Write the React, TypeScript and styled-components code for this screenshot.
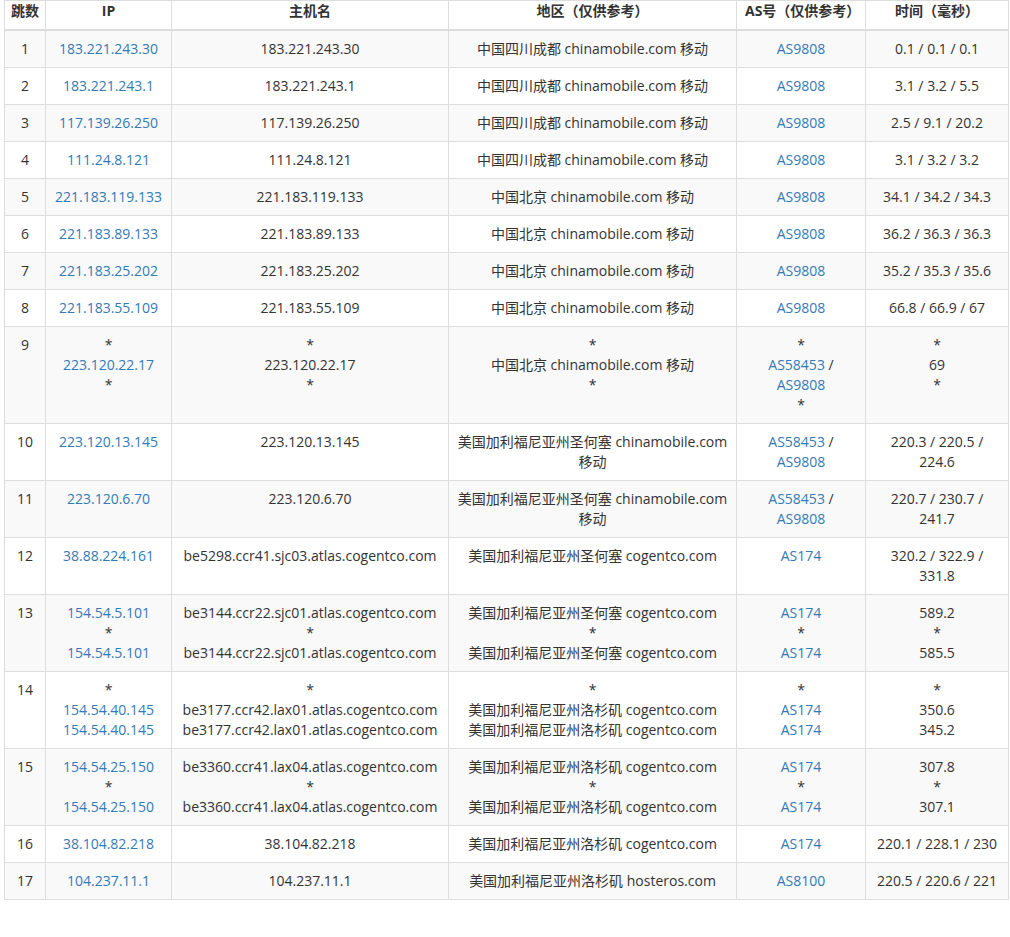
import React from "react";
import styled, { createGlobalStyle } from "styled-components";

const Global = createGlobalStyle`
  body {
    margin: 0;
    padding: 0 0 0 4px;
    background: #fff;
    font-family: "Open Sans", "Noto Sans CJK SC", sans-serif;
    font-size: 14px;
    color: #333;
  }
  * { box-sizing: border-box; }
`;

type Hop = { n: number; ip: string[]; host: string[]; area: string[]; as: string[]; time: string[] };

const hops: Hop[] = [
  { n: 1, ip: ["183.221.243.30"], host: ["183.221.243.30"], area: ["中国四川成都 chinamobile.com 移动"], as: ["AS9808"], time: ["0.1 / 0.1 / 0.1"] },
  { n: 2, ip: ["183.221.243.1"], host: ["183.221.243.1"], area: ["中国四川成都 chinamobile.com 移动"], as: ["AS9808"], time: ["3.1 / 3.2 / 5.5"] },
  { n: 3, ip: ["117.139.26.250"], host: ["117.139.26.250"], area: ["中国四川成都 chinamobile.com 移动"], as: ["AS9808"], time: ["2.5 / 9.1 / 20.2"] },
  { n: 4, ip: ["111.24.8.121"], host: ["111.24.8.121"], area: ["中国四川成都 chinamobile.com 移动"], as: ["AS9808"], time: ["3.1 / 3.2 / 3.2"] },
  { n: 5, ip: ["221.183.119.133"], host: ["221.183.119.133"], area: ["中国北京 chinamobile.com 移动"], as: ["AS9808"], time: ["34.1 / 34.2 / 34.3"] },
  { n: 6, ip: ["221.183.89.133"], host: ["221.183.89.133"], area: ["中国北京 chinamobile.com 移动"], as: ["AS9808"], time: ["36.2 / 36.3 / 36.3"] },
  { n: 7, ip: ["221.183.25.202"], host: ["221.183.25.202"], area: ["中国北京 chinamobile.com 移动"], as: ["AS9808"], time: ["35.2 / 35.3 / 35.6"] },
  { n: 8, ip: ["221.183.55.109"], host: ["221.183.55.109"], area: ["中国北京 chinamobile.com 移动"], as: ["AS9808"], time: ["66.8 / 66.9 / 67"] },
  { n: 9, ip: ["*", "223.120.22.17", "*"], host: ["*", "223.120.22.17", "*"], area: ["*", "中国北京 chinamobile.com 移动", "*"], as: ["*", "AS58453 / AS9808", "*"], time: ["*", "69", "*"] },
  { n: 10, ip: ["223.120.13.145"], host: ["223.120.13.145"], area: ["美国加利福尼亚州圣何塞 chinamobile.com 移动"], as: ["AS58453 / AS9808"], time: ["220.3 / 220.5 / 224.6"] },
  { n: 11, ip: ["223.120.6.70"], host: ["223.120.6.70"], area: ["美国加利福尼亚州圣何塞 chinamobile.com 移动"], as: ["AS58453 / AS9808"], time: ["220.7 / 230.7 / 241.7"] },
  { n: 12, ip: ["38.88.224.161"], host: ["be5298.ccr41.sjc03.atlas.cogentco.com"], area: ["美国加利福尼亚州圣何塞 cogentco.com"], as: ["AS174"], time: ["320.2 / 322.9 / 331.8"] },
  { n: 13, ip: ["154.54.5.101", "*", "154.54.5.101"], host: ["be3144.ccr22.sjc01.atlas.cogentco.com", "*", "be3144.ccr22.sjc01.atlas.cogentco.com"], area: ["美国加利福尼亚州圣何塞 cogentco.com", "*", "美国加利福尼亚州圣何塞 cogentco.com"], as: ["AS174", "*", "AS174"], time: ["589.2", "*", "585.5"] },
  { n: 14, ip: ["*", "154.54.40.145", "154.54.40.145"], host: ["*", "be3177.ccr42.lax01.atlas.cogentco.com", "be3177.ccr42.lax01.atlas.cogentco.com"], area: ["*", "美国加利福尼亚州洛杉矶 cogentco.com", "美国加利福尼亚州洛杉矶 cogentco.com"], as: ["*", "AS174", "AS174"], time: ["*", "350.6", "345.2"] },
  { n: 15, ip: ["154.54.25.150", "*", "154.54.25.150"], host: ["be3360.ccr41.lax04.atlas.cogentco.com", "*", "be3360.ccr41.lax04.atlas.cogentco.com"], area: ["美国加利福尼亚州洛杉矶 cogentco.com", "*", "美国加利福尼亚州洛杉矶 cogentco.com"], as: ["AS174", "*", "AS174"], time: ["307.8", "*", "307.1"] },
  { n: 16, ip: ["38.104.82.218"], host: ["38.104.82.218"], area: ["美国加利福尼亚州洛杉矶 cogentco.com"], as: ["AS174"], time: ["220.1 / 228.1 / 230"] },
  { n: 17, ip: ["104.237.11.1"], host: ["104.237.11.1"], area: ["美国加利福尼亚州洛杉矶 hosteros.com"], as: ["AS8100"], time: ["220.5 / 220.6 / 221"] },
];

const widths = [41, 126, 277, 288, 129, 143];

const Table = styled.table`
  width: 1004px;
  table-layout: fixed;
  border-collapse: collapse;
  line-height: 20px;
`;

const Th = styled.th`
  border: 1px solid #ddd;
  border-bottom: 2px solid #ddd;
  padding: 0 8px 8px;
  vertical-align: bottom;
  font-weight: bold;
  text-align: center;
`;

const NarrowTh = styled(Th)`
  padding: 0 4px 8px;
`;

const Row = styled.tr`
  &:nth-child(odd) {
    background: #f9f9f9;
  }
`;

const Td = styled.td`
  border: 1px solid #ddd;
  padding: 8px;
  vertical-align: top;
  text-align: center;
  overflow-wrap: break-word;
`;

const Link = styled.a`
  color: #337ab7;
  text-decoration: none;
`;

const Lines = ({ items, link }: { items: string[]; link?: boolean }) => (
  <>
    {items.map((t, i) => (
      <div key={i}>
        {t === "*" || !link
          ? t
          : t.split(" / ").map((p, j, a) => (
              <React.Fragment key={j}>
                <Link href="#">{p}</Link>
                {j < a.length - 1 ? " / " : ""}
              </React.Fragment>
            ))}
      </div>
    ))}
  </>
);

export default function App() {
  return (
    <>
      <Global />
      <Table>
        <colgroup>
          {widths.map((w, i) => (
            <col key={i} style={{ width: w }} />
          ))}
        </colgroup>
        <thead>
          <tr>
            <NarrowTh>跳数</NarrowTh>
            <Th>IP</Th>
            <Th>主机名</Th>
            <Th>地区（仅供参考）</Th>
            <Th>AS号（仅供参考）</Th>
            <Th>时间（毫秒）</Th>
          </tr>
        </thead>
        <tbody>
          {hops.map((h) => (
            <Row key={h.n}>
              <Td>{h.n}</Td>
              <Td><Lines items={h.ip} link /></Td>
              <Td><Lines items={h.host} /></Td>
              <Td><Lines items={h.area} /></Td>
              <Td><Lines items={h.as} link /></Td>
              <Td><Lines items={h.time} /></Td>
            </Row>
          ))}
        </tbody>
      </Table>
    </>
  );
}
